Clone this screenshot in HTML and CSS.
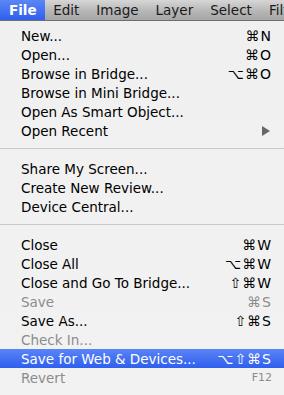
FILE: index.html
```html
<!DOCTYPE html>
<html lang="en">
<head>
  <meta charset="UTF-8">
  <title>File Menu</title>
  <link rel="stylesheet" href="styles.css">
</head>
<body>
  <div class="menubar">
    <span class="menu-title active">File</span>
    <span class="menu-title">Edit</span>
    <span class="menu-title">Image</span>
    <span class="menu-title">Layer</span>
    <span class="menu-title">Select</span>
    <span class="menu-title">Filter</span>
  </div>

  <div class="menu">
    <div class="item"><span>New...</span><span class="key">⌘N</span></div>
    <div class="item"><span>Open...</span><span class="key">⌘O</span></div>
    <div class="item"><span>Browse in Bridge...</span><span class="key">⌥⌘O</span></div>
    <div class="item"><span>Browse in Mini Bridge...</span></div>
    <div class="item"><span>Open As Smart Object...</span></div>
    <div class="item"><span>Open Recent</span><span class="arrow"></span></div>
    <div class="sep"></div>
    <div class="item"><span>Share My Screen...</span></div>
    <div class="item"><span>Create New Review...</span></div>
    <div class="item"><span>Device Central...</span></div>
    <div class="sep"></div>
    <div class="item"><span>Close</span><span class="key">⌘W</span></div>
    <div class="item"><span>Close All</span><span class="key">⌥⌘W</span></div>
    <div class="item"><span>Close and Go To Bridge...</span><span class="key">⇧⌘W</span></div>
    <div class="item disabled"><span>Save</span><span class="key">⌘S</span></div>
    <div class="item"><span>Save As...</span><span class="key">⇧⌘S</span></div>
    <div class="item disabled"><span>Check In...</span></div>
    <div class="item selected"><span>Save for Web &amp; Devices...</span><span class="key">⌥⇧⌘S</span></div>
    <div class="item disabled"><span>Revert</span><span class="key fkey">F12</span></div>
    <div class="sep"></div>
  </div>
</body>
</html>
```

FILE: styles.css
```css
body {
  margin: 0;
  width: 284px;
  height: 395px;
  overflow: hidden;
  background: #efefef;
  font-family: "DejaVu Sans", "Liberation Sans", sans-serif;
  font-size: 13.5px;
  color: #000;
}
.menubar {
  display: flex;
  height: 21px;
  align-items: center;
  background: linear-gradient(#d6d6d6, #b4b4b4 60%, #a6a6a6);
  border-bottom: 1px solid #6e6e6e;
  box-sizing: border-box;
  white-space: nowrap;
  font-size: 13.5px;
  overflow: hidden;
}
.menu-title {
  padding: 0 8.5px;
  height: 21px;
  line-height: 21px;
  color: #1a1a1a;
}
.menu-title.active {
  padding: 0 8px 0 9px;
  color: #fff;
  font-weight: bold;
  background: linear-gradient(#5b86f7, #2d5ded);
}
.menu {
  padding-top: 5px;
  background: linear-gradient(#f0f0f0, #f2f2f2);
}
.item {
  display: flex;
  justify-content: space-between;
  align-items: center;
  height: 19px;
  padding: 0 12px 0 21px;
  white-space: nowrap;
}
.key {
  font-size: 14px;
  letter-spacing: 1px;
}
.fkey {
  font-size: 11px;
  letter-spacing: 0;
}
.disabled {
  color: #8c8c8c;
}
.selected {
  color: #fff;
  background: linear-gradient(#5a84f6, #2f5fee);
}
.arrow {
  width: 0;
  height: 0;
  border-top: 5px solid transparent;
  border-bottom: 5px solid transparent;
  border-left: 8px solid #666;
  margin-right: 2px;
}
.sep {
  height: 19px;
  display: flex;
  align-items: center;
}
.sep::before {
  content: "";
  flex: 1;
  height: 1px;
  margin-top: -3px;
  background: #c9c9c9;
}
```
